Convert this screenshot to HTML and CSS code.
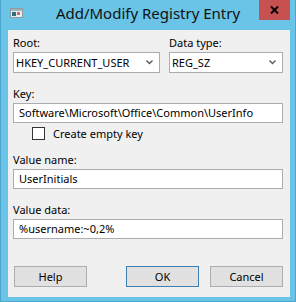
FILE: index.html
```html
<!DOCTYPE html>
<html lang="en">
<head>
  <meta charset="UTF-8">
  <title>Add/Modify Registry Entry</title>
  <link rel="stylesheet" href="styles.css">
</head>
<body>
  <div class="window">
    <div class="titlebar">
      <svg class="app-icon" width="13" height="10" viewBox="0 0 13 10">
        <rect x="0.5" y="0.5" width="12" height="9" fill="#e8eef0" stroke="#8c9ca2"/>
        <rect x="1" y="1" width="11" height="2" fill="#9fb4ba"/>
        <rect x="2" y="4" width="4" height="4" fill="#2f6f78"/>
        <rect x="7" y="4" width="3" height="3" fill="#d46a6a"/>
      </svg>
      <div class="title">Add/Modify Registry Entry</div>
      <div class="close-btn">
        <svg width="9" height="8" viewBox="0 0 9 8">
          <path d="M1 0.5 L8 7.5 M8 0.5 L1 7.5" stroke="#000" stroke-width="2"/>
        </svg>
      </div>
    </div>

    <div class="client">
      <div class="top-row">
        <div class="field">
          <div class="label">Root:</div>
          <div class="combo">
            <span>HKEY_CURRENT_USER</span>
            <svg class="arrow" width="7" height="5" viewBox="0 0 7 5"><polyline points="0.5,0.5 3.5,3.5 6.5,0.5" fill="none" stroke="#5a5a5a" stroke-width="1.4"/></svg>
          </div>
        </div>
        <div class="field">
          <div class="label">Data type:</div>
          <div class="combo">
            <span>REG_SZ</span>
            <svg class="arrow" width="7" height="5" viewBox="0 0 7 5"><polyline points="0.5,0.5 3.5,3.5 6.5,0.5" fill="none" stroke="#5a5a5a" stroke-width="1.4"/></svg>
          </div>
        </div>
      </div>

      <div class="field key-field">
        <div class="label">Key:</div>
        <div class="textbox">Software\Microsoft\Office\Common\UserInfo</div>
      </div>

      <div class="check-row">
        <span class="checkbox"></span>
        <span>Create empty key</span>
      </div>

      <div class="field name-field">
        <div class="label">Value name:</div>
        <div class="textbox">UserInitials</div>
      </div>

      <div class="field data-field">
        <div class="label">Value data:</div>
        <div class="textbox">%username:~0,2%</div>
      </div>

      <div class="buttons">
        <div class="button help">Help</div>
        <div class="button default">OK</div>
        <div class="button">Cancel</div>
      </div>
    </div>
  </div>
</body>
</html>
```

FILE: styles.css
```css
* {
  box-sizing: border-box;
  margin: 0;
  padding: 0;
}

body {
  font-family: "Noto Sans", "Open Sans", sans-serif;
  font-size: 11px;
  color: #000;
  background-color: #6ac4e7;
}

.window {
  width: 296px;
  height: 302px;
  background-color: #6ac4e7;
  border: 1px solid #4ba5cf;
  border-top: none;
  display: flex;
  flex-direction: column;
}

.titlebar {
  height: 30px;
  flex-shrink: 0;
  display: grid;
  grid-template-columns: 1fr auto 1fr;
  align-items: start;
}

.app-icon {
  margin-left: 9px;
  margin-top: 8px;
}

.title {
  font-size: 15px;
  line-height: 20px;
  margin-top: 3px;
  color: #111;
  white-space: nowrap;
}

.close-btn {
  justify-self: end;
  width: 31px;
  height: 20px;
  margin-right: 5px;
  background-color: #c75050;
  display: flex;
  align-items: center;
  justify-content: center;
}

.client {
  flex: 1;
  margin: 0 5px 4px 7px;
  padding: 6px 7px 10px 5px;
  background-color: #f0f0f0;
  display: flex;
  flex-direction: column;
}

.label {
  line-height: 14px;
  height: 14px;
  margin-bottom: 2px;
  white-space: nowrap;
}

.top-row {
  display: grid;
  grid-template-columns: 147px 114px;
  gap: 9px;
}

.combo {
  height: 21px;
  border: 1px solid #acacac;
  background-color: #fff;
  padding: 0 6px 0 2px;
  display: flex;
  align-items: center;
  justify-content: space-between;
  line-height: 19px;
  white-space: nowrap;
}

.textbox {
  height: 20px;
  border: 1px solid #abadb3;
  background-color: #fff;
  padding: 0 5px;
  line-height: 18px;
  white-space: nowrap;
  overflow: hidden;
}

.key-field {
  margin-top: 14px;
}

.check-row {
  margin-top: 4px;
  padding-left: 19px;
  display: flex;
  align-items: center;
  height: 13px;
  line-height: 13px;
}

.checkbox {
  width: 13px;
  height: 13px;
  border: 1px solid #333;
  background-color: #fff;
  margin-right: 8px;
}

.name-field {
  margin-top: 13px;
}

.data-field {
  margin-top: 14px;
}

.buttons {
  margin-top: auto;
  display: flex;
  gap: 11px;
  padding-left: 1px;
}

.button {
  width: 73px;
  height: 21px;
  background-color: #e1e1e1;
  border: 1px solid #adadad;
  text-align: center;
  line-height: 19px;
}

.button.help {
  margin-right: auto;
}

.button.default {
  border-color: #3c7fb1;
}
```
